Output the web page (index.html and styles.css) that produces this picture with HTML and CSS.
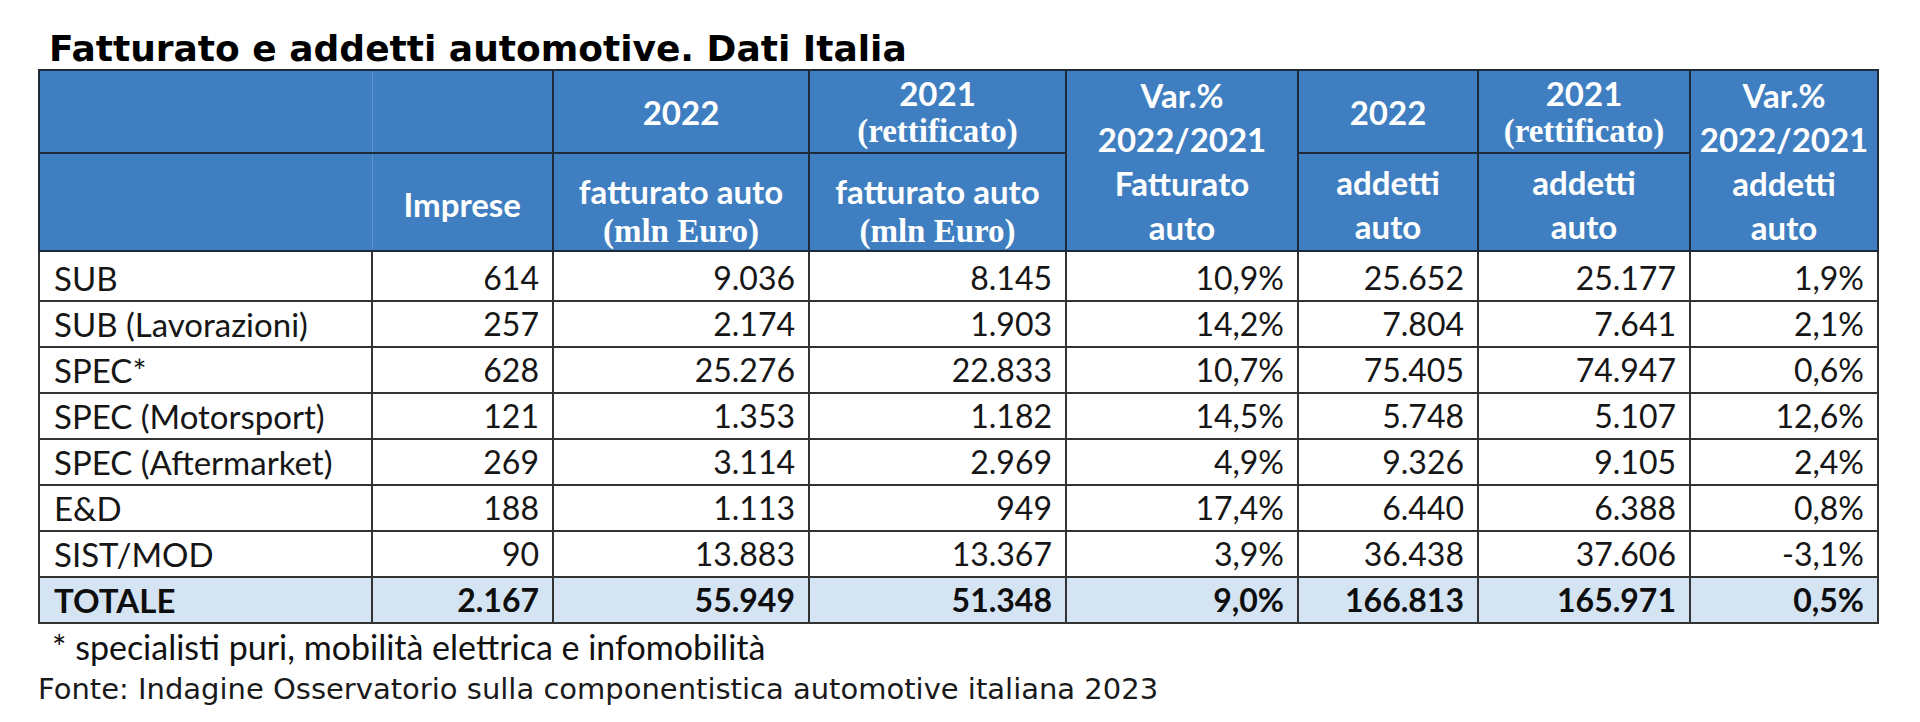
FILE: index.html
```html
<!DOCTYPE html>
<html lang="it">
<head>
<meta charset="utf-8">
<title>Fatturato e addetti automotive. Dati Italia</title>
<link rel="stylesheet" href="styles.css">
</head>
<body>
<div class="page">
  <h1 class="title">Fatturato e addetti automotive. Dati Italia</h1>
  <table class="data">
    <colgroup>
      <col class="c-name">
      <col class="c-imp">
      <col class="c-f22">
      <col class="c-f21">
      <col class="c-fvar">
      <col class="c-a22">
      <col class="c-a21">
      <col class="c-avar">
    </colgroup>
    <thead>
      <tr class="h1">
        <th class="soft soft-first"></th>
        <th class="soft"></th>
        <th>2022</th>
        <th>2021<br><span class="serif">(rettificato)</span></th>
        <th class="var" rowspan="2">Var.%<br>2022/2021<br>Fatturato<br>auto</th>
        <th>2022</th>
        <th>2021<br><span class="serif">(rettificato)</span></th>
        <th class="var" rowspan="2">Var.%<br>2022/2021<br>addetti<br>auto</th>
      </tr>
      <tr class="h2">
        <th class="soft soft-first low mid"></th>
        <th class="soft low mid">Imprese</th>
        <th class="money">fatturato auto<br><span class="serif">(mln Euro)</span></th>
        <th class="money">fatturato auto<br><span class="serif">(mln Euro)</span></th>
        <th class="mid">addetti<br>auto</th>
        <th class="mid">addetti<br>auto</th>
      </tr>
    </thead>
    <tbody>
      <tr class="first"><td class="lbl">SUB</td><td>614</td><td>9.036</td><td>8.145</td><td>10,9%</td><td>25.652</td><td>25.177</td><td>1,9%</td></tr>
      <tr><td class="lbl">SUB (Lavorazioni)</td><td>257</td><td>2.174</td><td>1.903</td><td>14,2%</td><td>7.804</td><td>7.641</td><td>2,1%</td></tr>
      <tr><td class="lbl">SPEC*</td><td>628</td><td>25.276</td><td>22.833</td><td>10,7%</td><td>75.405</td><td>74.947</td><td>0,6%</td></tr>
      <tr><td class="lbl">SPEC (Motorsport)</td><td>121</td><td>1.353</td><td>1.182</td><td>14,5%</td><td>5.748</td><td>5.107</td><td>12,6%</td></tr>
      <tr><td class="lbl">SPEC (Aftermarket)</td><td>269</td><td>3.114</td><td>2.969</td><td>4,9%</td><td>9.326</td><td>9.105</td><td>2,4%</td></tr>
      <tr><td class="lbl">E&amp;D</td><td>188</td><td>1.113</td><td>949</td><td>17,4%</td><td>6.440</td><td>6.388</td><td>0,8%</td></tr>
      <tr><td class="lbl">SIST/MOD</td><td>90</td><td>13.883</td><td>13.367</td><td>3,9%</td><td>36.438</td><td>37.606</td><td>-3,1%</td></tr>
      <tr class="total"><td class="lbl">TOTALE</td><td>2.167</td><td>55.949</td><td>51.348</td><td>9,0%</td><td>166.813</td><td>165.971</td><td>0,5%</td></tr>
    </tbody>
  </table>
  <p class="note">* specialisti puri, mobilità elettrica e infomobilità</p>
  <p class="source">Fonte: Indagine Osservatorio sulla componentistica automotive italiana 2023</p>
</div>
</body>
</html>
```

FILE: styles.css
```css
html, body {
  margin: 0;
  padding: 0;
  background: #ffffff;
}

.page {
  padding: 29px 0 0 38px;
}

.title {
  margin: 0 0 0 11px;
  font-family: "DejaVu Sans", sans-serif;
  font-weight: bold;
  font-size: 36px;
  line-height: 40px;
  color: #000;
}

.data {
  border-collapse: collapse;
  table-layout: fixed;
  width: 1839px;
  font-family: Lato, "Open Sans", sans-serif;
  color: #161616;
}

.c-name { width: 333px; }
.c-imp  { width: 181px; }
.c-f22  { width: 256px; }
.c-f21  { width: 257px; }
.c-fvar { width: 232px; }
.c-a22  { width: 180px; }
.c-a21  { width: 212px; }
.c-avar { width: 188px; }

.data th {
  background: #3f7fc1;
  color: #ffffff;
  font-weight: bold;
  font-size: 33px;
  text-align: center;
  vertical-align: middle;
  border: 2px solid #1f2a38;
  padding: 0 2px;
}

.data .h1 th {
  height: 81px;
  line-height: 36px;
}

.data .h1 th.var {
  line-height: 44px;
}

.data .h2 th.money {
  height: 76px;
  padding-top: 18px;
  line-height: 38px;
}

.data .h2 th.mid {
  height: 90px;
  padding-top: 4px;
  line-height: 44px;
}

.data th.soft {
  border-left: 1px solid #5b93cc;
  border-right: 1px solid #5b93cc;
  border-bottom: 1px solid #5b93cc;
}

.data th.soft-first {
  border-left: 2px solid #1f2a38;
}

.data .h1 th.soft {
  border-top: 2px solid #1f2a38;
}

.data .h2 th.low {
  border-bottom: 2px solid #1f2a38;
}

.serif {
  font-family: "Liberation Serif", "Times New Roman", serif;
  font-weight: bold;
  font-size: 33px;
}

.data td {
  height: 42px;
  border: 2px solid #333333;
  font-size: 32px;
  line-height: 40px;
  text-align: right;
  vertical-align: bottom;
  padding: 0 13px 2px 14px;
  white-space: nowrap;
}

.data tr.first td {
  height: 46px;
}

.data td.lbl {
  text-align: left;
  font-size: 33px;
}

.data tr.total td {
  background: #d5e4f3;
  font-weight: bold;
  color: #0e0e0e;
}

.note {
  margin: 5px 0 0 14px;
  font-family: Lato, "Open Sans", sans-serif;
  font-size: 34px;
  line-height: 36px;
  color: #111;
}

.source {
  margin: 7px 0 0 0;
  font-family: "DejaVu Sans", sans-serif;
  font-size: 29px;
  line-height: 34px;
  color: #1a1a1a;
}
```
